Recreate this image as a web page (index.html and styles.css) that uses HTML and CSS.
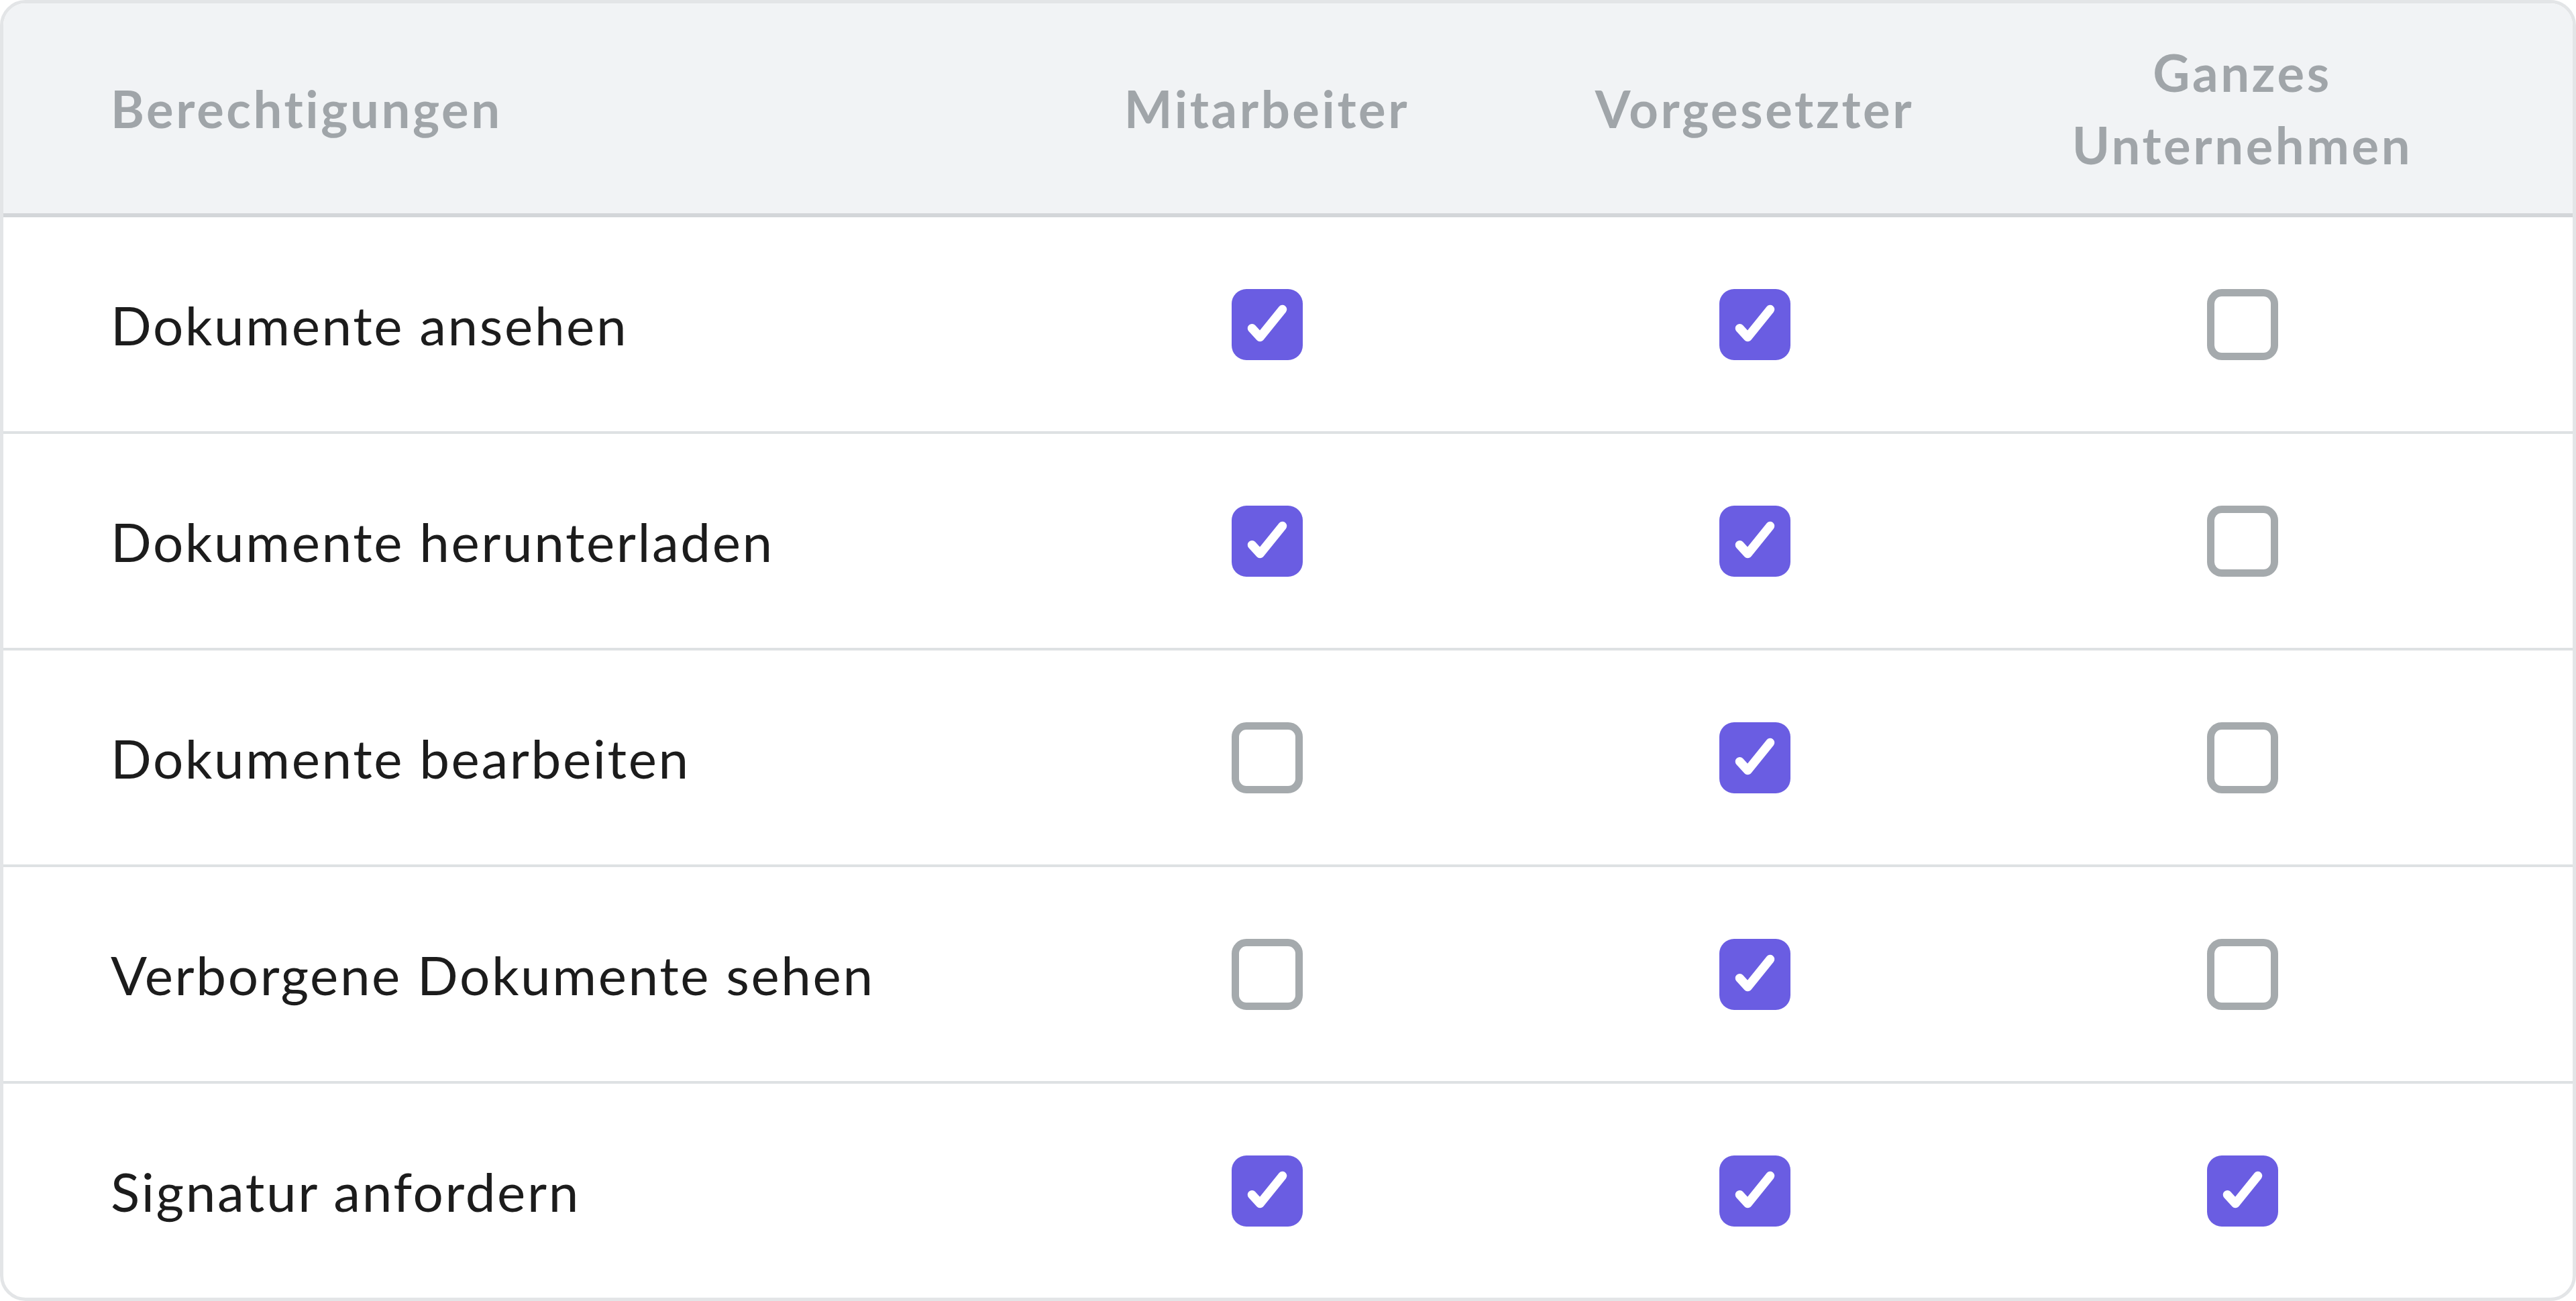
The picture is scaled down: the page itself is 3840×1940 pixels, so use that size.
FILE: index.html
```html
<!DOCTYPE html>
<html lang="de">
<head>
<meta charset="utf-8">
<title>Berechtigungen</title>
<link rel="stylesheet" href="styles.css">
</head>
<body>
<div class="card">
  <div class="row head">
    <div class="cell label">Berechtigungen</div>
    <div class="cell col">Mitarbeiter</div>
    <div class="cell col">Vorgesetzter</div>
    <div class="cell col">Ganzes<br>Unternehmen</div>
    <div class="cell"></div>
  </div>

  <div class="row">
    <div class="cell label">Dokumente ansehen</div>
    <div class="cell col"><span class="box on"><svg viewBox="0 0 105 105"><path d="M30 58 L42 71 L75 30"/></svg></span></div>
    <div class="cell col"><span class="box on"><svg viewBox="0 0 105 105"><path d="M30 58 L42 71 L75 30"/></svg></span></div>
    <div class="cell col"><span class="box off"></span></div>
    <div class="cell"></div>
  </div>

  <div class="row">
    <div class="cell label">Dokumente herunterladen</div>
    <div class="cell col"><span class="box on"><svg viewBox="0 0 105 105"><path d="M30 58 L42 71 L75 30"/></svg></span></div>
    <div class="cell col"><span class="box on"><svg viewBox="0 0 105 105"><path d="M30 58 L42 71 L75 30"/></svg></span></div>
    <div class="cell col"><span class="box off"></span></div>
    <div class="cell"></div>
  </div>

  <div class="row">
    <div class="cell label">Dokumente bearbeiten</div>
    <div class="cell col"><span class="box off"></span></div>
    <div class="cell col"><span class="box on"><svg viewBox="0 0 105 105"><path d="M30 58 L42 71 L75 30"/></svg></span></div>
    <div class="cell col"><span class="box off"></span></div>
    <div class="cell"></div>
  </div>

  <div class="row">
    <div class="cell label">Verborgene Dokumente sehen</div>
    <div class="cell col"><span class="box off"></span></div>
    <div class="cell col"><span class="box on"><svg viewBox="0 0 105 105"><path d="M30 58 L42 71 L75 30"/></svg></span></div>
    <div class="cell col"><span class="box off"></span></div>
    <div class="cell"></div>
  </div>

  <div class="row last">
    <div class="cell label">Signatur anfordern</div>
    <div class="cell col"><span class="box on"><svg viewBox="0 0 105 105"><path d="M30 58 L42 71 L75 30"/></svg></span></div>
    <div class="cell col"><span class="box on"><svg viewBox="0 0 105 105"><path d="M30 58 L42 71 L75 30"/></svg></span></div>
    <div class="cell col"><span class="box on"><svg viewBox="0 0 105 105"><path d="M30 58 L42 71 L75 30"/></svg></span></div>
    <div class="cell"></div>
  </div>
</div>
</body>
</html>
```

FILE: styles.css
```css
html, body {
  margin: 0;
  padding: 0;
  background: #ffffff;
}

body {
  font-family: Lato, "Open Sans", "Liberation Sans", sans-serif;
  width: 3840px;
  height: 1940px;
  overflow: hidden;
}

.card {
  box-sizing: border-box;
  width: 3840px;
  height: 1940px;
  border: 5px solid #e3e5e7;
  border-radius: 38px;
  overflow: hidden;
  background: #ffffff;
  display: flex;
  flex-direction: column;
}

.row {
  display: grid;
  grid-template-columns: 1520px 727px 727px 727px 1fr;
  height: 319px;
  border-bottom: 4px solid #dee1e3;
  flex: none;
}

.row.last {
  border-bottom: none;
  flex: 1;
}

.row.head {
  height: 313px;
  background: #f1f3f5;
  border-bottom: 6px solid #d3d6d9;
}

.cell {
  display: flex;
  align-items: center;
}

.label {
  padding-left: 160px;
  font-size: 80px;
  color: #1c1c1c;
  letter-spacing: 2.6px;
}

.col {
  justify-content: center;
  text-align: center;
}

.head .cell {
  font-size: 76px;
  font-weight: 700;
  color: #a0a5a9;
  line-height: 108px;
  letter-spacing: 3.6px;
}

.box {
  box-sizing: border-box;
  display: block;
  width: 106px;
  height: 106px;
  border-radius: 22px;
}

.box.on {
  background: #6a5de2;
}

.box.off {
  border: 11px solid #a5aaad;
  background: #ffffff;
}

.box svg {
  display: block;
  width: 106px;
  height: 106px;
  fill: none;
  stroke: #ffffff;
  stroke-width: 13;
  stroke-linecap: round;
  stroke-linejoin: round;
}
```
